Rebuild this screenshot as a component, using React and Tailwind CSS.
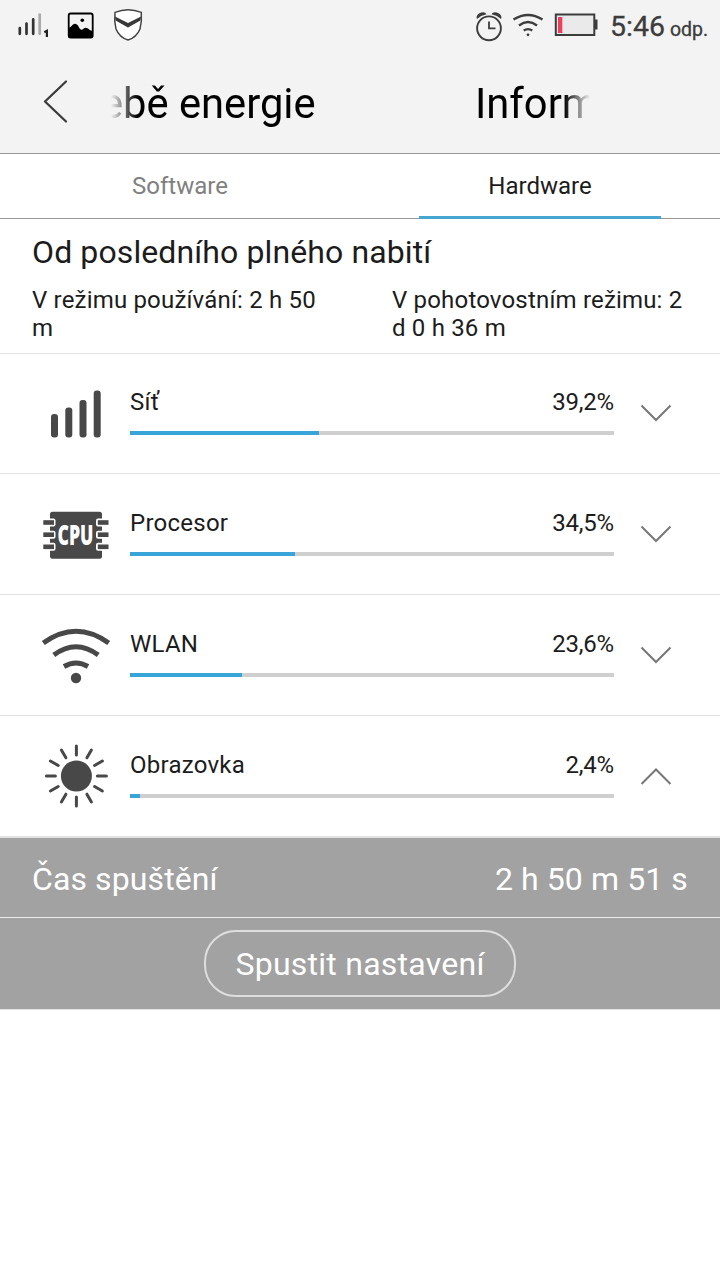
const ink = '#484848';

function SignalIcon() {
  return (
    <svg width="72" height="60" viewBox="0 0 72 60" fill={ink}>
      <rect x="11" y="29" width="7" height="23.500" rx="3" />
      <rect x="25.300" y="22.500" width="7" height="30" rx="3" />
      <rect x="39.500" y="15" width="7" height="37.500" rx="3" />
      <rect x="53.700" y="5.500" width="7" height="47" rx="3" />
    </svg>
  );
}

function CpuIcon() {
  const pins = [18.200, 30.400, 42.500];
  return (
    <svg width="72" height="60" viewBox="0 0 72 60">
      <rect x="10" y="7.700" width="52" height="47" rx="2.500" fill={ink} />
      {pins.map((y) => (
        <g key={y} transform={`translate(0 ${y})`}>
          <rect x="1" y="-3.700" width="14.500" height="8" rx="2" fill="#fff" />
          <rect x="56" y="-3.700" width="15" height="8" rx="2" fill="#fff" />
          <rect x="3.300" y="-2" width="10.700" height="4.600" fill={ink} />
          <rect x="57.800" y="-2" width="10.700" height="4.600" fill={ink} />
        </g>
      ))}
      <text x="35.500" y="40.700" textAnchor="middle" textLength="36" lengthAdjust="spacingAndGlyphs" fontFamily="Open Sans, sans-serif" fontWeight="800" fontSize="28" fill="#fff">CPU</text>
    </svg>
  );
}

function WlanIcon() {
  return (
    <svg width="72" height="60" viewBox="0 0 72 60" fill="none" stroke={ink} strokeWidth="5">
      <path d="M3.300 17Q36-6.500 68.700 17" />
      <path d="M13.800 29Q36 12.500 58.200 29" />
      <path d="M24 40.500Q36 33.500 48 40.500" />
      <circle cx="36" cy="52" r="5.200" fill={ink} stroke="none" />
    </svg>
  );
}

function SunIcon() {
  const rays = [0, 30, 60, 90, 120, 150, 180, 210, 240, 270, 300, 330];
  return (
    <svg width="72" height="70" viewBox="0 0 72 70">
      <circle cx="36.400" cy="35" r="15.500" fill={ink} />
      {rays.map((a) => (
        <line key={a} x1="36.400" y1="5" x2="36.400" y2="14" stroke={ink} strokeWidth="3" strokeLinecap="round" transform={`rotate(${a} 36.400 35)`} />
      ))}
    </svg>
  );
}

function StatusBar() {
  return (
    <div className="flex h-[52px] items-start">
      <svg width="160" height="52" viewBox="0 0 160 52" className="shrink-0">
        <g strokeWidth="2.700" stroke="#333" strokeLinecap="round">
          <path d="M19.800 28v5.800M26.500 23.500v10.300M33.200 19.300v14.500" />
          <path d="M39.700 14.500v19.300" stroke="#aaa" />
        </g>
        <path d="M44.300 32.300l2.600-1.500V37" fill="none" stroke="#222" strokeWidth="2.200" />
        <rect x="68.700" y="13.500" width="24" height="24" rx="2" fill="#f3f3f3" stroke="#000" strokeWidth="1.800" />
        <path d="M68.500 28Q71 27 73 24.500Q75.500 22.500 78 25.500Q80 30.500 82.500 29.500Q85 26.500 88 28.500Q90 30.500 92.500 31V37.500h-24z" fill="#000" />
        <circle cx="82.300" cy="20.200" r="1.800" fill="#000" />
        <path d="M115 12.400Q128 7 141.300 12.400Q142 21 140 29Q136.500 37.500 128 40Q119.500 37.500 116 29Q114 21 115 12.400Z" fill="#fff" stroke="#444" strokeWidth="1.500" />
        <path d="M115 16.500l13 6.500 13-6.500-.6 4-12.400 7-12.400-7z" fill="#383838" />
      </svg>
      <div className="flex-1" />
      <svg width="130" height="52" viewBox="470 0 130 52" fill="none" stroke="#3c3c3c" className="shrink-0">
        <circle cx="489" cy="28.300" r="11.900" strokeWidth="1.900" />
        <path d="M489 21.500v6.800h6.500" strokeWidth="1.800" />
        <path d="M477 19Q475.500 16 479 13.500Q484.500 10.500 486.500 14.300Q480.500 15.500 477 19ZM501 19Q502.500 16 499 13.500Q493.500 10.500 491.500 14.300Q497.500 15.500 501 19Z" fill="#3c3c3c" stroke="none" />
        <path d="M513.500 19.500Q528 10.500 542.500 19.500M519 25.500Q528 18.700 537 25.500M523.700 30.500Q528 27.800 532.300 30.500" strokeWidth="2.400" />
        <circle cx="528" cy="34.800" r="1.400" fill="#3c3c3c" stroke="none" />
        <rect x="555.800" y="14.500" width="38.500" height="20.500" fill="#eaeaea" strokeWidth="2" />
        <rect x="558" y="17" width="4.300" height="16" fill="#ed3f5d" stroke="none" />
        <path d="M595 19.500h2.500v10h-2.500z" fill="#3c3c3c" stroke="none" />
      </svg>
      <div className="flex h-[52px] w-[120px] items-baseline pl-[10px] text-[#3c3c3c]">
        <span className="text-[28.5px] leading-[54px] [-webkit-text-stroke:0.3px_#3c3c3c]">5:46</span>
        <span className="ml-[5px] text-[19.5px] [-webkit-text-stroke:0.3px_#3c3c3c]">odp.</span>
      </div>
    </div>
  );
}

function Header() {
  return (
    <header className="h-[154px] border-b border-[#989898] bg-[#f3f3f3]">
      <StatusBar />
      <div className="flex h-[101px]">
        <svg width="111" height="101" viewBox="0 52 111 101" className="shrink-0" fill="none" stroke="#3c3c3c" strokeWidth="2.300" strokeLinecap="round" strokeLinejoin="round">
          <path d="M66 81.500L45 101.500L66 121.500" />
        </svg>
        <div className="flex w-[479px] overflow-hidden whitespace-nowrap text-[41.7px] leading-[104px] text-black [mask-image:linear-gradient(to_right,transparent,black_26px,black_453px,transparent)]">
          <span className="-ml-[10px] w-[374px] shrink-0">ebě energie</span>
          <span className="shrink-0">Inform</span>
        </div>
      </div>
    </header>
  );
}

const items = [
  { name: 'Síť', value: '39,2%', fill: 189, Icon: SignalIcon, iconTop: 'pt-[31px]', size: 'h-[120px]', top: 'pt-[33px]' },
  { name: 'Procesor', value: '34,5%', fill: 165, Icon: CpuIcon, iconTop: 'pt-[30px]', size: 'h-[121px]', top: 'pt-[34px]' },
  { name: 'WLAN', value: '23,6%', fill: 112, Icon: WlanIcon, iconTop: 'pt-[31px]', size: 'h-[121px]', top: 'pt-[34px]' },
  { name: 'Obrazovka', value: '2,4%', fill: 10, Icon: SunIcon, iconTop: 'pt-[25px]', size: 'h-[122px]', top: 'pt-[34px]', open: true },
];

function UsageRow({ name, value, fill, Icon, iconTop, size, top, open }) {
  return (
    <div className={`flex border-[#e2e2e2] ${size} ${open ? 'border-b-2' : 'border-b'}`}>
      <div className={`w-[130px] shrink-0 pl-[40px] ${iconTop}`}><Icon /></div>
      <div className={`w-[484px] ${top}`}>
        <div className="flex h-[44px] justify-between text-[24px] leading-[30px] text-[#1c1c1c]">
          <span className="tracking-[0.250px]">{name}</span>
          <span className="tracking-[-0.200px]">{value}</span>
        </div>
        <div className="h-1 bg-[#cfcfcf]">
          <div className="h-1 bg-[#38a5d8]" style={{ width: fill }} />
        </div>
      </div>
      <div className={`pl-[26px] ${top}`}>
        <svg width="32" height="50" viewBox="0 0 32 50" fill="none" stroke="#777" strokeWidth="2">
          <path d={open ? 'M1.500 34L16 19.500L30.500 34' : 'M1.500 18.500L16 33L30.500 18.500'} />
        </svg>
      </div>
    </div>
  );
}

export default function App() {
  return (
    <main className="h-[1280px] w-[720px] overflow-hidden bg-white font-[Roboto,sans-serif] text-[#1c1c1c]">
      <Header />
      <nav className="grid h-[65px] grid-cols-2 border-b border-[#989898] text-center text-[24px] leading-[64px]">
        <div className="text-[#808080]">Software</div>
        <div className="flex h-[65px] justify-center">
          <div className="h-[65px] w-[242px] border-b-[3px] border-[#45a6d0]">Hardware</div>
        </div>
      </nav>
      <section className="h-[135px] border-b border-[#e2e2e2] px-8 pt-3">
        <h1 className="h-[55px] text-[32px] leading-[42px] tracking-[0.110px]">Od posledního plného nabití</h1>
        <div className="grid grid-cols-[360px_310px] text-[24px] leading-[28px] tracking-[0.180px]">
          <p>V režimu používání: 2 h 50<br />m</p>
          <p>V pohotovostním režimu: 2<br />d 0 h 36 m</p>
        </div>
      </section>
      {items.map((item) => <UsageRow key={item.name} {...item} />)}
      <section className="h-[172px] border-b border-[#e2e2e2] bg-[#a2a2a2] text-[32px] text-white">
        <div className="flex h-[80px] justify-between border-b border-[#ececec] px-8 leading-[82px] tracking-[0.100px]">
          <span>Čas spuštění</span>
          <span>2 h 50 m 51 s</span>
        </div>
        <div className="flex justify-center pt-3">
          <button className="h-[67px] w-[312px] rounded-[32px] border-2 border-[#dedede] leading-[65px] tracking-[0.250px]">Spustit nastavení</button>
        </div>
      </section>
    </main>
  );
}
